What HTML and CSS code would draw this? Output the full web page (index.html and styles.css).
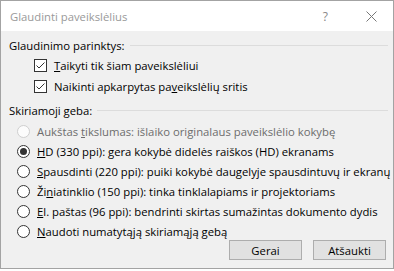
FILE: index.html
```html
<!DOCTYPE html>
<html lang="lt">
<head>
<meta charset="utf-8">
<link rel="stylesheet" href="styles.css">
</head>
<body>
<div class="window">
  <div class="titlebar">
    <span class="title">Glaudinti paveikslėlius</span>
    <span class="help">?</span>
    <svg class="close" width="11" height="11" viewBox="0 0 11 11"><path d="M0.5 0.5L10.5 10.5M10.5 0.5L0.5 10.5" stroke="#777" stroke-width="1" fill="none"/></svg>
  </div>
  <div class="body">
    <div class="group-head"><span>Glaudinimo parinktys:</span><div class="rule"></div></div>
    <div class="checks">
      <label class="row check"><span class="box"><svg width="11" height="11" viewBox="0 0 11 11"><path d="M1.5 5.5L4 8L9.5 2.5" stroke="#333" stroke-width="1" fill="none"/></svg></span><span><u>T</u>aikyti tik šiam paveikslėliui</span></label>
      <label class="row check"><span class="box"><svg width="11" height="11" viewBox="0 0 11 11"><path d="M1.5 5.5L4 8L9.5 2.5" stroke="#333" stroke-width="1" fill="none"/></svg></span><span>Naikinti apkarpytas pa<u>v</u>eikslėlių sritis</span></label>
    </div>
    <div class="group-head second"><span>Skiriamoji geba:</span><div class="rule"></div></div>
    <div class="radios">
      <label class="row radio disabled"><span class="circle"></span><span>Aukštas <u>t</u>ikslumas: išlaiko originalaus paveikslėlio kokybę</span></label>
      <label class="row radio"><span class="circle on"></span><span><u>H</u>D (330 ppi): gera kokybė didelės raiškos (HD) ekranams</span></label>
      <label class="row radio"><span class="circle"></span><span><u>S</u>pausdinti (220 ppi): puiki kokybė daugelyje spausdintuvų ir ekranų</span></label>
      <label class="row radio"><span class="circle"></span><span>Ži<u>n</u>iatinklio (150 ppi): tinka tinklalapiams ir projektoriams</span></label>
      <label class="row radio"><span class="circle"></span><span><u>E</u>l. paštas (96 ppi): bendrinti skirtas sumažintas dokumento dydis</span></label>
      <label class="row radio"><span class="circle"></span><span><u>N</u>audoti numatytąją skiriamąją gebą</span></label>
    </div>
    <div class="buttons">
      <button class="btn">Gerai</button>
      <button class="btn">Atšaukti</button>
    </div>
  </div>
</div>
</body>
</html>
```
FILE: styles.css
```css
* { box-sizing: border-box; }
html, body { margin: 0; padding: 0; background: #fff; }
body { font-family: "Open Sans", "Noto Sans", sans-serif; font-size: 11.3px; color: #000; }
.window {
  width: 394px; height: 269px;
  border: 1px solid #a3a3a3;
  background: #f0f0f0;
  display: flex; flex-direction: column;
}
.titlebar {
  height: 30px; background: #fff; flex-shrink: 0;
  display: flex; align-items: center;
  padding: 0 0 0 9px;
}
.title { color: #999; font-size: 11.3px; flex: 1; }
.help { color: #888; font-size: 12px; margin-right: 38px; }
.close { margin-right: 16px; }
.body { flex: 1; padding: 6px 5px 0 8px; display: flex; flex-direction: column; }
.body > * { flex-shrink: 0; }
.group-head { display: flex; align-items: center; height: 16px; }
.group-head .rule { flex: 1; height: 1px; background: #dcdcdc; margin-left: 5px; }
.group-head.second { margin-top: 8px; }
.checks { display: flex; flex-direction: column; gap: 6px; padding-left: 25px; margin-top: 5px; }
.row { display: flex; align-items: center; height: 15px; white-space: nowrap; }
.box {
  width: 13px; height: 13px; border: 1px solid #333; background: #fff; flex-shrink: 0;
  display: flex; align-items: center; justify-content: center; margin-right: 7px;
}
.radios { display: flex; flex-direction: column; gap: 5px; padding-left: 8px; margin-top: 6px; }
.circle {
  width: 13px; height: 13px; border-radius: 50%; border: 1px solid #333; background: #fff; flex-shrink: 0;
  margin-right: 7px; display: flex; align-items: center; justify-content: center;
}
.circle.on::after { content: ""; width: 7px; height: 7px; border-radius: 50%; background: #333; }
.disabled { color: #6d6d6d; }
.disabled .circle { border-color: #cfcfcf; background: #fcfcfc; }
.buttons { display: flex; justify-content: flex-end; gap: 11px; margin-top: 1px; padding-right: 2px; }
.btn {
  width: 73px; height: 20px; background: #e1e1e1; border: 1px solid #adadad;
  font-family: inherit; font-size: 11.3px; color: #000; padding: 0;
}
```
